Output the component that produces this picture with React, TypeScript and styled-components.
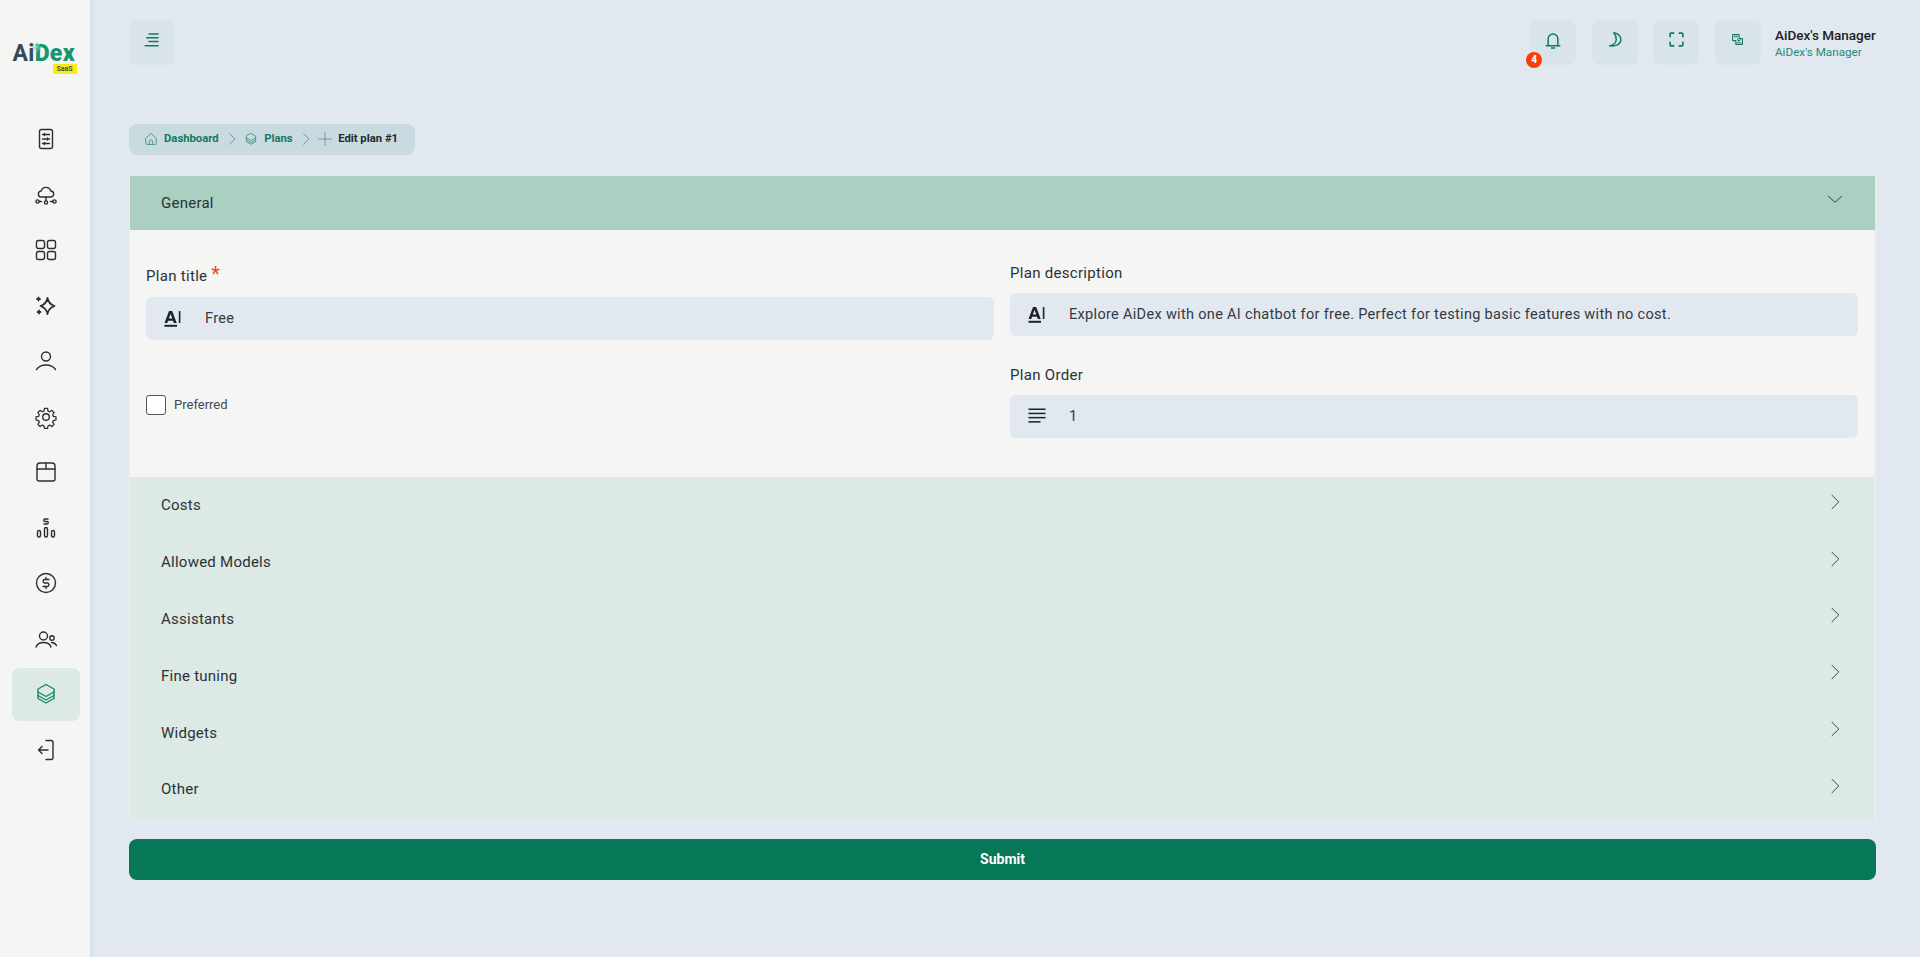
import React from 'react';
import styled, { createGlobalStyle } from 'styled-components';

const GlobalStyle = createGlobalStyle`
    * {
        box-sizing: border-box;
    }
    html, body {
        margin: 0;
        padding: 0;
        height: 100%;
        background: #e1e8f0;
        font-family: "Roboto", "Liberation Sans", sans-serif;
        overflow: hidden;
    }
`;

type IconProps = { size?: number; color?: string; width?: number };

const Svg = ({ size = 24, color = 'currentColor', width = 1.4, children }: IconProps & { children: React.ReactNode }) => (
    <svg width={size} height={size} viewBox="0 0 24 24" fill="none" stroke={color} strokeWidth={width} strokeLinecap="round" strokeLinejoin="round">
        {children}
    </svg>
);

const ReportIcon = () => (
    <Svg>
        <rect x="5.500" y="2.500" width="13" height="19" rx="2" />
        <path d="M8.500 7.500h7M8.500 12h7M8.500 16.500h7" />
        <path d="M10.500 6.500v2M13.500 11v2M10.500 15.500v2" />
    </Svg>
);
const CloudIcon = () => (
    <Svg>
        <path d="M7.500 14a3 3 0 0 1 -.3 -6A5 5 0 0 1 16.800 8a3 3 0 0 1 -.3 6z" />
        <path d="M12 14v3.500M5 18.500h2.500M19 18.500h-2.500" />
        <circle cx="3.500" cy="18.500" r="1.600" />
        <circle cx="12" cy="19.500" r="1.600" />
        <circle cx="20.500" cy="18.500" r="1.600" />
    </Svg>
);
const GridIcon = () => (
    <Svg>
        <rect x="2.500" y="2.500" width="8" height="8" rx="2" />
        <rect x="13.500" y="2.500" width="8" height="8" rx="2" />
        <rect x="2.500" y="13.500" width="8" height="8" rx="2" />
        <rect x="13.500" y="13.500" width="8" height="8" rx="2" />
    </Svg>
);
const SparkIcon = () => (
    <Svg width={1.800}>
        <path d="M13.500 4c.8 4.500 2.500 6.500 7 8 -4.500 1.500 -6.200 3.500 -7 8 -.8 -4.500 -2.500 -6.500 -7 -8 4.500 -1.500 6.200 -3.500 7 -8z" />
        <path d="M4.500 3.500v3M3 5h3M5 16.500v3M3.500 18h3" />
    </Svg>
);
const UserIcon = () => (
    <Svg>
        <circle cx="12" cy="7.500" r="4.500" />
        <path d="M2.500 20.500c2.500 -3.500 5.500 -4.500 9.500 -4.500s7 1 9.500 4.500" />
    </Svg>
);
const GearIcon = () => (
    <Svg>
        <circle cx="12" cy="12" r="3.300" />
        <path d="M10.300 2.500h3.400l.6 2.900 1.800.8 2.500 -1.600 2.400 2.400 -1.600 2.500.8 1.800 2.900.6v3.400l-2.900.6 -.8 1.800 1.600 2.500 -2.400 2.400 -2.500 -1.600 -1.800.8 -.6 2.900h-3.400l-.6 -2.900 -1.800 -.8 -2.500 1.600 -2.400 -2.400 1.600 -2.500 -.8 -1.800 -2.900 -.6v-3.400l2.900 -.6.8 -1.800 -1.600 -2.500 2.400 -2.400 2.500 1.600 1.800 -.8z" transform="translate(1.200 1.200) scale(.9)" />
    </Svg>
);
const BoxIcon = () => (
    <Svg>
        <path d="M6 3h12a3 3 0 0 1 3 3v13a2 2 0 0 1 -2 2H5a2 2 0 0 1 -2 -2V6a3 3 0 0 1 3 -3z" />
        <path d="M3 9h18M12 3v6" />
    </Svg>
);
const SalesIcon = () => (
    <Svg>
        <rect x="3.500" y="14.500" width="3" height="6.500" rx="1.500" />
        <rect x="10.500" y="11.500" width="3" height="9.500" rx="1.500" />
        <rect x="17.500" y="14.500" width="3" height="6.500" rx="1.500" />
        <path d="M14 3h-3a1.200 1.200 0 0 0 0 2.500h2a1.200 1.200 0 0 1 0 2.500h-3" />
    </Svg>
);
const DollarIcon = () => (
    <Svg>
        <circle cx="12" cy="12" r="9.500" />
        <path d="M15 8.500h-4.500a1.800 1.800 0 0 0 0 3.500h3a1.800 1.800 0 0 1 0 3.500H9M12 6.500v2M12 15.500v2" />
    </Svg>
);
const UsersIcon = () => (
    <Svg>
        <circle cx="9.500" cy="9" r="4" />
        <path d="M2 20c1 -3 4 -4.500 7.500 -4.500s6.500 1.500 7.500 4.500" />
        <circle cx="18" cy="11" r="2.200" />
        <path d="M17.500 15.500c2.500 0 4 1 5 3" />
    </Svg>
);
const LayersIcon = ({ size = 24 }: IconProps) => (
    <Svg size={size}>
        <path d="M12 2.500l8 4.500v3l-8 4.500 -8 -4.500v-3z" />
        <path d="M4 10v3.500l8 4.500 8 -4.500v-3.500" />
        <path d="M4 13.500v3l8 4.500 8 -4.500v-3" />
    </Svg>
);
const LogoutIcon = () => (
    <Svg>
        <path d="M12 2.500h5a2 2 0 0 1 2 2v15a2 2 0 0 1 -2 2h-5" />
        <path d="M14 12h-9M8 8.500l-3.500 3.500 3.500 3.500" />
    </Svg>
);
const HomeIcon = () => (
    <Svg size={14}>
        <path d="M3 10.500l9 -8 9 8v8.500a2.500 2.500 0 0 1 -2.500 2.500h-13a2.500 2.500 0 0 1 -2.500 -2.500z" />
        <path d="M9 21.500v-5a3 3 0 0 1 6 0v5" />
    </Svg>
);
const ChevronRight = ({ size = 14, width = 1.300 }: IconProps) => (
    <Svg size={size} width={width}>
        <path d="M8 3l9 9 -9 9" />
    </Svg>
);
const ChevronDown = () => (
    <Svg size={18} width={1.300}>
        <path d="M3 7l9 8 9 -8" />
    </Svg>
);
const PlusIcon = () => (
    <Svg size={14} width={1.200}>
        <path d="M12 1v22M1 12h22" />
    </Svg>
);
const MenuIcon = () => (
    <Svg size={18} width={2}>
        <path d="M8 4h12M5 9h15M8 14h12M3 19.500h17" />
    </Svg>
);
const BellIcon = () => (
    <Svg size={18} width={2}>
        <path d="M5.500 19V10.500a6.500 6.500 0 0 1 13 0V19M3 19.500h18" />
        <path d="M10 22.500h4" />
    </Svg>
);
const MoonIcon = () => (
    <Svg size={17} width={2}>
        <path d="M11 2.500c5.500 1 10 4.500 10 10 0 5.500 -6 9.500 -16 8.500 4.500 -1 9 -3.500 9.500 -9 .2 -4 -1.500 -7 -3.500 -9.500z" />
    </Svg>
);
const ExpandIcon = () => (
    <Svg size={17} width={2.300}>
        <path d="M3 8V4.500a1.500 1.500 0 0 1 1.500 -1.500H8M16 3h3.500a1.500 1.500 0 0 1 1.500 1.500V8M21 16v3.500a1.500 1.500 0 0 1 -1.500 1.500H16M8 21H4.500a1.500 1.500 0 0 1 -1.500 -1.500V16" />
    </Svg>
);
const TranslateIcon = () => (
    <Svg size={13} width={2}>
        <path d="M3 3h12v7h6v11H9v-7H3z" />
        <path d="M6 7h6M12 12l5 6M17 12l-5 6" />
    </Svg>
);
const AiIcon = () => (
    <svg width="18" height="18" viewBox="0 0 18 18" fill="#1f2328">
        <path fillRule="evenodd" d="M0.500 13L5 1h3.200L12.700 13H9.800l-.8 -2.300H4.100l-.8 2.300zM4.800 8.600h3.500L6.600 3.900z" />
        <rect x="14.800" y="1" width="1.600" height="12" />
        <rect x="0.500" y="14.800" width="12.500" height="2" />
    </svg>
);
const LinesIcon = () => (
    <svg width="18" height="18" viewBox="0 0 18 18" fill="#1f2328">
        <rect x="0.500" y="0.500" width="17" height="1.500" />
        <rect x="0.500" y="4.700" width="17" height="1.500" />
        <rect x="0.500" y="8.900" width="17" height="1.500" />
        <rect x="0.500" y="13.100" width="12" height="1.500" />
    </svg>
);
const LogoSpark = () => (
    <svg width="10" height="10" viewBox="0 0 10 10" fill="none" stroke="#7fd0a8" strokeWidth="1">
        <path d="M5 0v10M0 5h10M1.500 1.500l7 7M8.500 1.500l-7 7" />
    </svg>
);

const navIcons = [
    <ReportIcon />, <CloudIcon />, <GridIcon />, <SparkIcon />, <UserIcon />, <GearIcon />,
    <BoxIcon />, <SalesIcon />, <DollarIcon />, <UsersIcon />, <LayersIcon />, <LogoutIcon />,
];

const collapsedSections = ['Costs', 'Allowed Models', 'Assistants', 'Fine tuning', 'Widgets', 'Other'];

export default function App() {
    return (
        <>
            <GlobalStyle />
            <Page>
                <Sidebar>
                    <Logo>
                        <LogoWord>
                            <LogoAi>Ai</LogoAi>
                            <LogoDex>Dex</LogoDex>
                            <SparkMark><LogoSpark /></SparkMark>
                        </LogoWord>
                        <LogoBadge>SaaS</LogoBadge>
                    </Logo>
                    <Nav>
                        {navIcons.map((icon, i) => (
                            <NavItem key={i} $active={i === 10}>{icon}</NavItem>
                        ))}
                    </Nav>
                </Sidebar>
                <Main>
                    <Topbar>
                        <IconButton><MenuIcon /></IconButton>
                        <TopbarRight>
                            <IconButton>
                                <BellIcon />
                                <CountBadge>4</CountBadge>
                            </IconButton>
                            <IconButton><MoonIcon /></IconButton>
                            <IconButton><ExpandIcon /></IconButton>
                            <IconButton><TranslateIcon /></IconButton>
                            <Account>
                                <AccountName>AiDex's Manager</AccountName>
                                <AccountRole>AiDex's Manager</AccountRole>
                            </Account>
                        </TopbarRight>
                    </Topbar>
                    <Breadcrumb>
                        <CrumbIcon><HomeIcon /></CrumbIcon>
                        <CrumbLink>Dashboard</CrumbLink>
                        <CrumbSep><ChevronRight /></CrumbSep>
                        <CrumbIcon><LayersIcon size={14} /></CrumbIcon>
                        <CrumbLink>Plans</CrumbLink>
                        <CrumbSep><ChevronRight /></CrumbSep>
                        <CrumbIcon $muted><PlusIcon /></CrumbIcon>
                        <CrumbCurrent>Edit plan #1</CrumbCurrent>
                    </Breadcrumb>
                    <Accordion>
                        <OpenHeader>
                            <OpenTitle>General</OpenTitle>
                            <Chevron><ChevronDown /></Chevron>
                        </OpenHeader>
                        <FormBody>
                            <Column>
                                <TitleLabel>Plan title <Required>*</Required></TitleLabel>
                                <InputBox>
                                    <InputIcon><AiIcon /></InputIcon>
                                    <InputValue>Free</InputValue>
                                </InputBox>
                                <CheckRow>
                                    <CheckBox type="checkbox" />
                                    <CheckLabel>Preferred</CheckLabel>
                                </CheckRow>
                            </Column>
                            <Column>
                                <FieldLabel>Plan description</FieldLabel>
                                <InputBox>
                                    <InputIcon><AiIcon /></InputIcon>
                                    <InputValue>Explore AiDex with one AI chatbot for free. Perfect for testing basic features with no cost.</InputValue>
                                </InputBox>
                                <SecondLabel>Plan Order</SecondLabel>
                                <InputBox>
                                    <InputIcon><LinesIcon /></InputIcon>
                                    <InputValue>1</InputValue>
                                </InputBox>
                            </Column>
                        </FormBody>
                        {collapsedSections.map((title) => (
                            <ClosedHeader key={title}>
                                <SectionTitle>{title}</SectionTitle>
                                <Chevron><ChevronRight size={18} /></Chevron>
                            </ClosedHeader>
                        ))}
                    </Accordion>
                    <SubmitButton>Submit</SubmitButton>
                </Main>
                <ScrollTrack />
            </Page>
        </>
    );
}

const Page = styled.div`
    display: flex;
    height: 957px;
    background: #e1e8f0;
`;

const Sidebar = styled.aside`
    flex: 0 0 90px;
    padding-left: 2px;
    display: flex;
    flex-direction: column;
    align-items: center;
    background: #f5f5f3;
    box-shadow: 3px 0 3px rgba(200, 215, 225, 0.45);
`;

const Logo = styled.div`
    width: 64px;
    margin-top: 42px;
    margin-left: -3px;
    display: flex;
    flex-direction: column;
    align-items: flex-end;
`;

const LogoWord = styled.div`
    position: relative;
    width: 100%;
    font-size: 23px;
    line-height: 24px;
    font-weight: 700;
    letter-spacing: 0.3px;
    white-space: nowrap;
`;

const SparkMark = styled.span`
    position: absolute;
    left: 19px;
    top: 0;
    display: flex;
`;

const LogoAi = styled.span`
    color: #34495e;
`;

const LogoDex = styled.span`
    color: #15966d;
    font-weight: 900;
`;

const LogoBadge = styled.div`
    width: 24px;
    height: 10px;
    margin-top: -2px;
    background: #ffe81a;
    color: #1a5e45;
    font-size: 7px;
    font-weight: 700;
    line-height: 10px;
    text-align: center;
`;

const Nav = styled.nav`
    margin-top: 39px;
    display: flex;
    flex-direction: column;
    align-items: center;
    gap: 3px;
`;

const NavItem = styled.div<{ $active?: boolean }>`
    width: 68px;
    height: 52.500px;
    display: flex;
    align-items: center;
    justify-content: center;
    border-radius: 8px;
    color: ${(p) => (p.$active ? '#1a8a68' : '#2b2f33')};
    background: ${(p) => (p.$active ? '#dce9e4' : 'transparent')};
`;

const Main = styled.main`
    flex: 1;
    min-width: 0;
    padding: 20px 39px 0 39px;
    display: flex;
    flex-direction: column;
`;

const ScrollTrack = styled.div`
    flex: 0 0 5px;
    background: #e4e9f1;
`;

const Topbar = styled.header`
    display: flex;
    justify-content: space-between;
    align-items: flex-start;
`;

const TopbarRight = styled.div`
    display: flex;
    gap: 15.500px;
`;

const IconButton = styled.div`
    position: relative;
    width: 46px;
    height: 45px;
    border-radius: 8px;
    background: #d9e4e8;
    color: #0f7a5c;
    display: flex;
    align-items: center;
    justify-content: center;
    padding-bottom: 6px;
`;

const CountBadge = styled.span`
    position: absolute;
    left: -4px;
    top: 32px;
    width: 16px;
    height: 16px;
    border-radius: 50%;
    background: #f73f0b;
    color: #fff;
    font-size: 10px;
    font-weight: 700;
    line-height: 16px;
    text-align: center;
`;

const Account = styled.div`
    margin-left: -1px;
    padding-top: 6px;
    width: 101px;
`;

const AccountName = styled.div`
    font-size: 13.500px;
    line-height: 18px;
    font-weight: 500;
    color: #1d2125;
    white-space: nowrap;
`;

const AccountRole = styled.div`
    font-size: 11.700px;
    line-height: 16px;
    color: #2a8a70;
    white-space: nowrap;
`;

const Breadcrumb = styled.nav`
    align-self: flex-start;
    margin-top: 59px;
    height: 31px;
    width: 286px;
    padding: 0 0 2px 15px;
    border-radius: 8px;
    background: #c9dbe0;
    display: flex;
    align-items: center;
    font-size: 11.300px;
    font-weight: 700;
    white-space: nowrap;
`;

const CrumbIcon = styled.span<{ $muted?: boolean }>`
    display: flex;
    color: ${(p) => (p.$muted ? '#5c7f80' : '#3a9079')};
    margin-right: 6px;
`;

const CrumbLink = styled.span`
    color: #137a5f;
`;

const CrumbSep = styled.span`
    display: flex;
    color: #5c7f80;
    margin: 0 5.500px 0 6px;
`;

const CrumbCurrent = styled.span`
    color: #23282c;
`;

const Accordion = styled.section`
    margin-top: 21px;
    padding-bottom: 1.500px;
    background: #dce9e4;
    border-left: 1px solid #e9eeee;
    border-right: 2px solid #e9eeee;
`;

const OpenHeader = styled.div`
    height: 54px;
    margin-right: -1px;
    padding: 0 31px 0 31px;
    background: #abcfc1;
    display: flex;
    align-items: center;
    justify-content: space-between;
`;

const ClosedHeader = styled.div`
    height: 56.800px;
    padding: 0 30px 0 31px;
    background: #dce9e4;
    display: flex;
    align-items: center;
    justify-content: space-between;
`;

const SectionTitle = styled.span`
    font-size: 15px;
    letter-spacing: 0.25px;
    color: #2b3236;
`;

const OpenTitle = styled(SectionTitle)`
    margin-bottom: 1px;
`;

const Chevron = styled.span`
    display: flex;
    color: #3a4448;
    margin-bottom: 7px;
`;

const FormBody = styled.div`
    height: 247px;
    background: #f5f5f3;
    padding: 33px 16px 0 16px;
    display: grid;
    grid-template-columns: 1fr 1fr;
    column-gap: 16px;
`;

const Column = styled.div`
    display: flex;
    flex-direction: column;
    align-items: stretch;
`;

const FieldLabel = styled.label`
    font-size: 15px;
    letter-spacing: 0.3px;
    line-height: 20px;
    color: #2b3236;
    margin-bottom: 10px;
`;

const TitleLabel = styled(FieldLabel)`
    padding-top: 1px;
    line-height: 24px;
    margin-bottom: 9px;
`;

const SecondLabel = styled(FieldLabel)`
    margin-top: 29px;
`;

const Required = styled.span`
    color: #f0451a;
    font-size: 20px;
    line-height: 16px;
`;

const InputBox = styled.div`
    height: 43px;
    border-radius: 6px;
    background: #e1e8f0;
    display: flex;
    align-items: center;
    padding-left: 18px;
`;

const InputIcon = styled.span`
    display: flex;
    width: 41px;
`;

const InputValue = styled.span`
    font-size: 14.500px;
    letter-spacing: 0.32px;
    color: #343a40;
    white-space: nowrap;
`;

const CheckRow = styled.div`
    margin-top: 55px;
    display: flex;
    align-items: center;
    gap: 8px;
`;

const CheckBox = styled.input`
    appearance: none;
    margin: 0;
    width: 20px;
    height: 20px;
    border: 1px solid #555;
    border-radius: 3px;
    background: #fff;
`;

const CheckLabel = styled.span`
    font-size: 13px;
    color: #444a50;
    margin-bottom: 2px;
`;

const SubmitButton = styled.button`
    margin-top: 20px;
    height: 41px;
    padding-bottom: 3px;
    border: none;
    border-radius: 8px;
    background: #077857;
    color: #fff;
    font-family: inherit;
    font-size: 14px;
    font-weight: 700;
`;
